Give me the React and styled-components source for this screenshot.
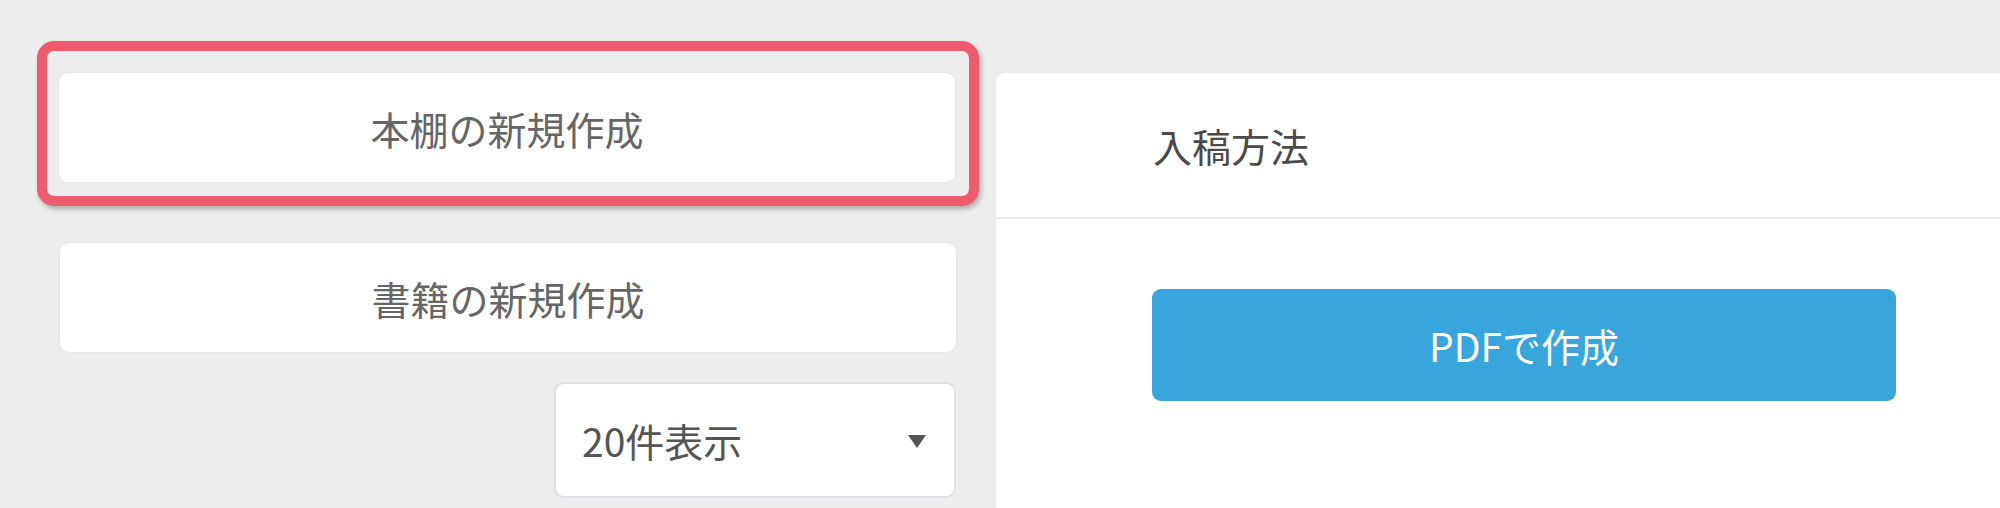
import React from "react";
import styled, { createGlobalStyle } from "styled-components";

const GlobalStyle = createGlobalStyle`
  body {
    margin: 0;
    background: #ededed;
    font-family: "Noto Sans CJK JP", "Noto Sans", sans-serif;
  }
`;

const Page = styled.div`
  display: flex;
  gap: 17px;
  padding: 41px 0 0 37px;
  height: 508px;
  box-sizing: border-box;
  overflow: hidden;
`;

const LeftColumn = styled.div`
  width: 942px;
  flex-shrink: 0;
  display: flex;
  flex-direction: column;
`;

const Highlight = styled.div`
  border: 10px solid #ec5b6e;
  border-radius: 17px;
  padding: 22px 14px 14px 12px;
  box-shadow: 2px 3px 5px rgba(0, 0, 0, 0.28);
`;

const Stack = styled.div`
  display: flex;
  flex-direction: column;
  align-items: flex-end;
  gap: 30px;
  padding: 37px 23px 0 22px;
`;

const CardButton = styled.button`
  width: 896px;
  height: 109px;
  border: none;
  border-radius: 9px;
  background: #fff;
  box-shadow: 0 0 0 1px #e6e6e6;
  color: #666;
  font-family: inherit;
  font-size: 39px;
  cursor: pointer;
  padding: 0;
`;

const Select = styled.div`
  width: 402px;
  height: 116px;
  box-sizing: border-box;
  border: 2px solid #dfe1e6;
  border-radius: 10px;
  background: #fff;
  display: flex;
  align-items: center;
  justify-content: space-between;
  padding: 0 28px 0 26px;
  color: #555;
  font-size: 39px;
`;

const Caret = styled.span`
  width: 0;
  height: 0;
  border-left: 9px solid transparent;
  border-right: 9px solid transparent;
  border-top: 13px solid #555;
  margin-top: 2px;
`;

const Panel = styled.div`
  flex: 1;
  margin-top: 32px;
  background: #fff;
  border-radius: 9px 0 0 0;
  display: flex;
  flex-direction: column;
`;

const PanelHeader = styled.div`
  height: 144px;
  border-bottom: 2px solid #eeeeee;
  display: flex;
  align-items: center;
  padding-left: 157px;
`;

const PanelTitle = styled.h2`
  margin: 0;
  font-size: 39px;
  font-weight: 400;
  color: #4a4a4a;
`;

const PanelBody = styled.div`
  padding: 70px 0 0 156px;
`;

const PrimaryButton = styled.button`
  width: 744px;
  height: 112px;
  border: none;
  border-radius: 9px;
  background: #38a6dc;
  color: #fff;
  font-family: inherit;
  font-size: 39px;
  cursor: pointer;
`;

export default function App() {
  return (
    <>
      <GlobalStyle />
      <Page>
        <LeftColumn>
          <Highlight>
            <CardButton>本棚の新規作成</CardButton>
          </Highlight>
          <Stack>
            <CardButton>書籍の新規作成</CardButton>
            <Select>
              <span>20件表示</span>
              <Caret />
            </Select>
          </Stack>
        </LeftColumn>
        <Panel>
          <PanelHeader>
            <PanelTitle>入稿方法</PanelTitle>
          </PanelHeader>
          <PanelBody>
            <PrimaryButton>PDFで作成</PrimaryButton>
          </PanelBody>
        </Panel>
      </Page>
    </>
  );
}
